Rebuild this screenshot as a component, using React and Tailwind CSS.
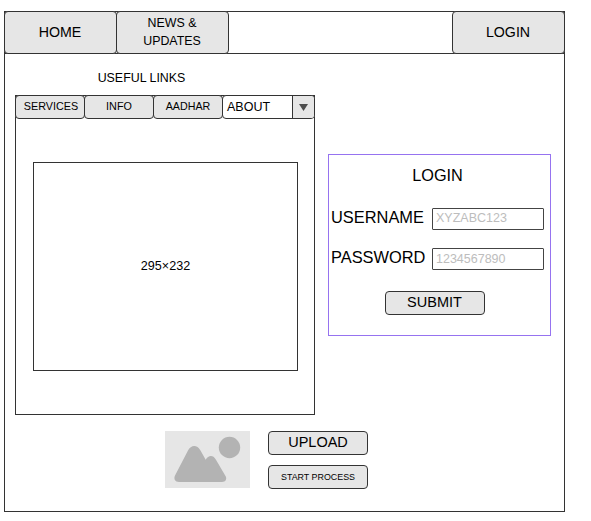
const line = "border border-[#333333]";
const button = `flex items-center justify-center rounded-[4px] bg-[#e6e6e6] whitespace-nowrap ${line}`;

function TopBar() {
  return (
    <header className="-mx-px -mt-px flex h-[43px] border border-[#333333]">
      <button className={`${button} -my-px -ml-px w-[113px] pb-[2px] pr-px text-[14.2px] leading-[18px]`}>HOME</button>
      <button className={`${button} -my-px -ml-px w-[113px] pb-px pr-px text-[12.4px] leading-[18px]`}>
        <span>NEWS &amp;<br />UPDATES</span>
      </button>
      <button className={`${button} -my-px -mr-px ml-auto w-[113px] pb-[2px] pr-px text-[14.2px] leading-[18px]`}>LOGIN</button>
    </header>
  );
}

function LinksPanel() {
  return (
    <section className="ml-[10px] w-[300px] pt-[15px]">
      <h2 className="pr-[47px] text-center text-[12.4px] leading-[18px]">USEFUL LINKS</h2>
      <div className="mt-[8px] h-[320px] border border-[#333333]">
        <nav className="-mx-px -mt-px flex h-[24px]">
          <button className={`${button} w-[70px] pl-[2px] pb-px text-[10.8px]`}>SERVICES</button>
          <button className={`${button} -ml-px w-[70px] pb-px text-[10.8px]`}>INFO</button>
          <button className={`${button} -ml-px w-[70px] pb-px text-[10.7px]`}>AADHAR</button>
          <button className="-ml-px flex w-[93px] overflow-hidden rounded-[4px] border border-[#333333] bg-white text-[12.5px]">
            <span className="flex flex-1 items-center self-stretch pl-[4px]">ABOUT</span>
            <span className="flex w-[22px] items-center justify-center self-stretch border-l border-[#333333] bg-[#e6e6e6]">
              <svg width="9" height="7" viewBox="0 0 9 7"><path d="M0 0H9L4.5 7Z" fill="#4d4d4d" /></svg>
            </span>
          </button>
        </nav>
        <div className="ml-[17px] mt-[43px] flex h-[209px] w-[265px] items-center justify-center border border-[#333333] text-[12.6px]">
          295×232
        </div>
      </div>
    </section>
  );
}

function Field({ label, placeholder, inputPadding }) {
  return (
    <label className="flex h-[22px] items-center">
      <span className="w-[101px] pb-[4px] text-[16.4px] leading-[18px]">{label}</span>
      <input
        className={`h-[22px] w-[112px] rounded-[1px] border border-[#444444] bg-white pl-[3px] text-[12.5px] placeholder:text-[#bdbdbd] ${inputPadding}`}
        placeholder={placeholder}
      />
    </label>
  );
}

function LoginCard() {
  return (
    <form className="ml-[13px] mt-[100px] flex h-[182px] w-[223px] flex-col border border-[#9673f0] pl-[2px]">
      <h2 className="mt-[11px] pr-[6px] text-center text-[16.3px] leading-[18px]">LOGIN</h2>
      <div className="mt-[24px] flex flex-col gap-[18px]">
        <Field label="USERNAME" placeholder="XYZABC123" inputPadding="pb-[2px]" />
        <Field label="PASSWORD" placeholder="1234567890" inputPadding="pb-0" />
      </div>
      <button type="button" className={`${button} ml-[54px] mt-[21px] h-[24px] w-[100px] pb-[2px] pr-px text-[14.5px] leading-[18px]`}>SUBMIT</button>
    </form>
  );
}

function Thumbnail() {
  return (
    <svg width="85" height="57" viewBox="0 0 85 57">
      <rect width="85" height="57" fill="#e6e6e6" />
      <g fill="#b3b3b3">
        <circle cx="64.5" cy="16.5" r="10.7" />
        <path d="M14 51C10 51 8.500 47.500 10 44.500L23 19.500C26 13.700 32 13.300 35.500 19.500L40.700 28.700C43.500 24 48 23.800 50.800 28.500L60.500 45C62.300 48 60.500 51 57 51Z" />
      </g>
    </svg>
  );
}

export default function App() {
  return (
    <div className="h-[521px] w-[591px] overflow-hidden bg-white pl-[4px] pt-[11px] font-['Liberation_Sans',Arial,sans-serif] text-black">
      <main className="h-[501px] w-[561px] border border-[#333333]">
        <TopBar />
        <div className="flex items-start">
          <LinksPanel />
          <LoginCard />
        </div>
        <div className="ml-[160px] mt-[16px] flex gap-[18px]">
          <Thumbnail />
          <div className="flex flex-col gap-[10px]">
            <button className={`${button} h-[24px] w-[100px] pb-[2px] text-[14.5px] leading-[18px]`}>UPLOAD</button>
            <button className={`${button} h-[24px] w-[100px] pb-px text-[8.9px] leading-[12px]`}>START PROCESS</button>
          </div>
        </div>
      </main>
    </div>
  );
}
